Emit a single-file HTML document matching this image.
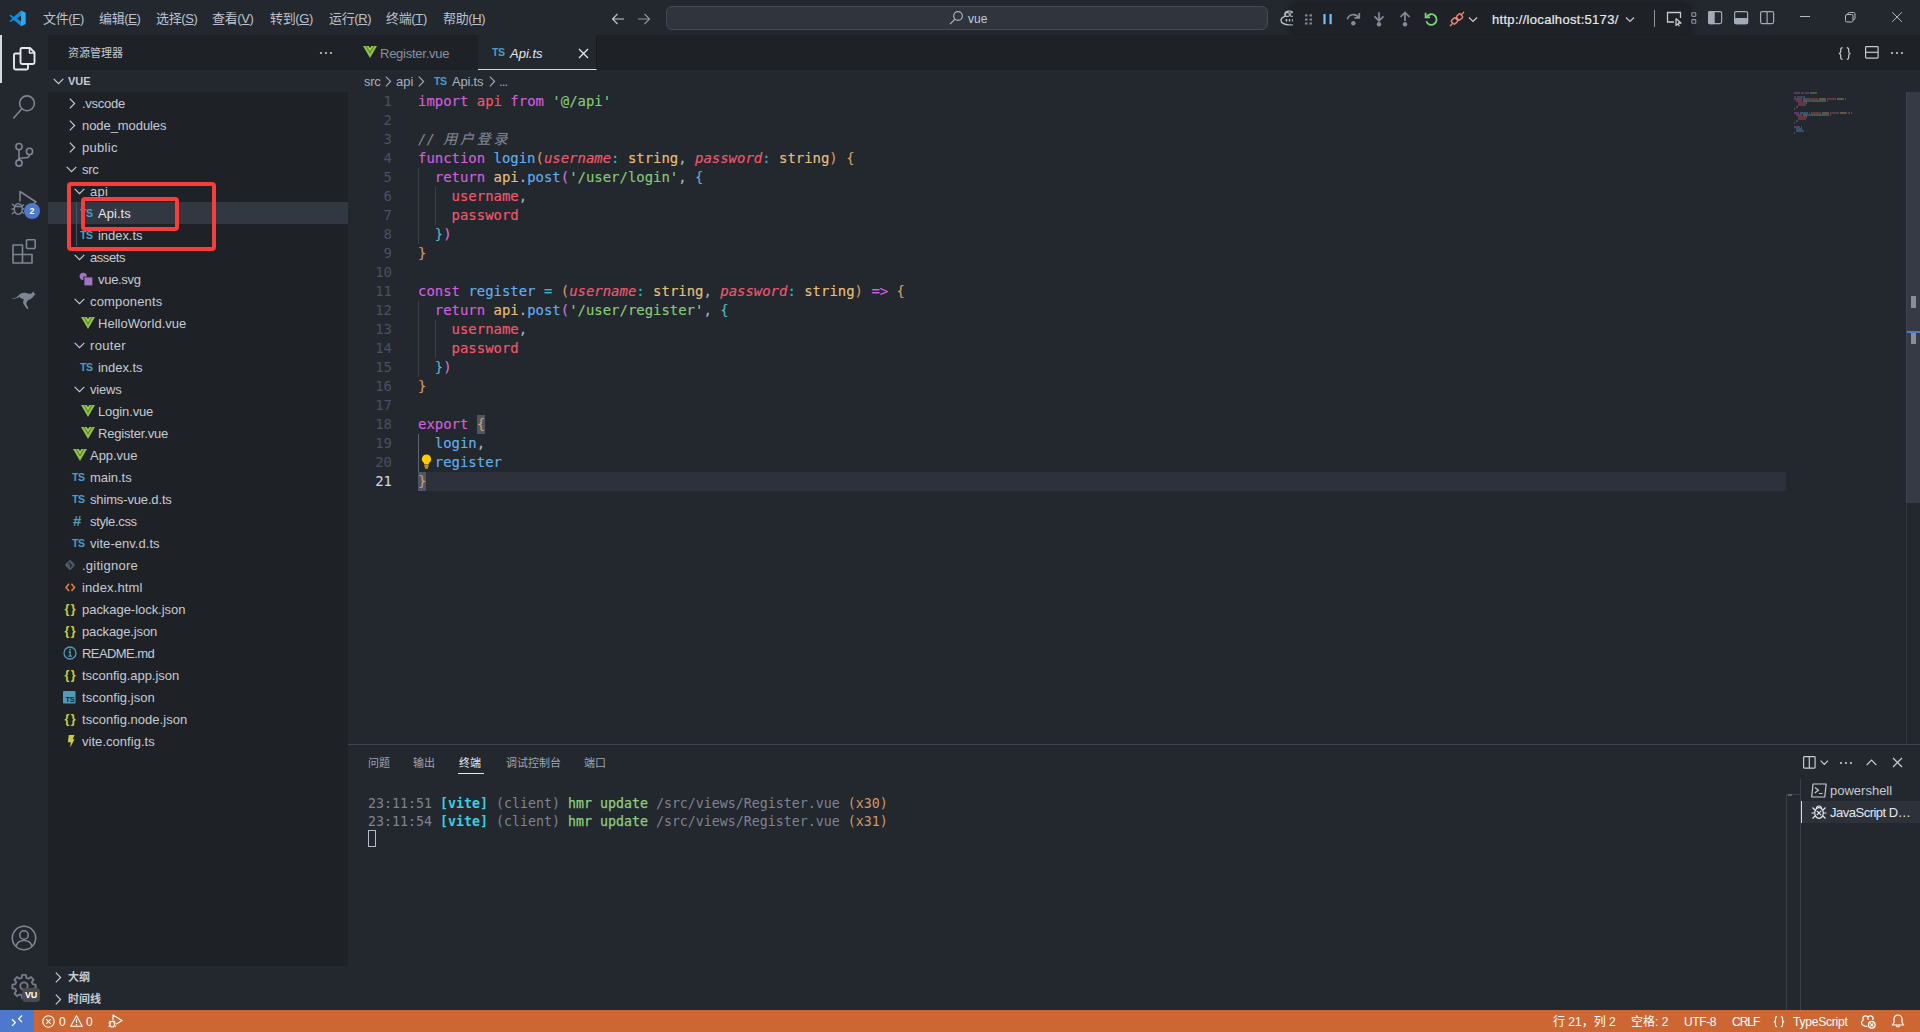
<!DOCTYPE html>
<html lang="zh-CN">
<head>
<meta charset="utf-8">
<title>Api.ts - vue - Visual Studio Code</title>
<style>
*{box-sizing:border-box;margin:0;padding:0}
html,body{width:1920px;height:1032px;overflow:hidden;background:#23272e}
body{position:relative;font-family:"Liberation Sans","Noto Sans CJK SC",sans-serif;font-size:13px;color:#c8ccd4;-webkit-font-smoothing:antialiased}
.abs{position:absolute}
svg{display:block;overflow:visible}
/* title bar */
#title{position:absolute;left:0;top:0;width:1920px;height:35px;background:#23272e}
.menu{position:absolute;top:0;height:35px;line-height:37px;font-size:13px;color:#bcc2cd;white-space:nowrap;letter-spacing:-0.35px}
#search{position:absolute;left:666px;top:6px;width:602px;height:24px;border-radius:6px;background:#2f343d;border:1px solid #434956}
#dbg{position:absolute;left:1293px;top:5.500px;width:396px;height:28.500px;background:#1e2227;border-radius:5px;box-shadow:0 0 8px 2px rgba(0,0,0,.36)}
/* activity bar */
#act{position:absolute;left:0;top:35px;width:48px;height:975px;background:#23272e}
/* sidebar */
#side{position:absolute;left:48px;top:35px;width:300px;height:975px;background:#1e2227}
.sechead{position:absolute;left:0;width:300px;height:22px;background:#23272e;font-weight:bold;font-size:11px;color:#c5cad3;line-height:22px}
.row{position:absolute;left:0;width:300px;height:22px;line-height:22px;font-size:13px;color:#c5cad3;white-space:nowrap;letter-spacing:-0.15px}
.row .t{position:absolute;top:1px}
.row svg,.row .ic{position:absolute}
.ts{font-weight:bold;font-size:10.5px;color:#4b9cc8;letter-spacing:-0.3px;font-family:"Liberation Sans",sans-serif}
/* editor */
#tabs{position:absolute;left:348px;top:35px;width:1572px;height:35px;background:#1e2227}
.tab{position:absolute;top:0;height:35px;line-height:37px;font-size:13px;white-space:nowrap}
#crumbs{position:absolute;left:348px;top:70px;width:1572px;height:22px;background:#23272e;line-height:24px;font-size:13px;color:#a9b0bd;white-space:nowrap}
#code{position:absolute;left:348px;top:92px;width:1558px;height:652px;background:#23272e;font-family:"DejaVu Sans Mono","Liberation Mono","Noto Sans CJK SC",monospace;font-size:13.95px;line-height:19px}
.cj{letter-spacing:2.8px;font-size:14px}
.ln{position:absolute;left:0;width:44px;text-align:right;color:#495162;height:19px}
.cl{position:absolute;left:70px;top:0;height:19px;white-space:pre;color:#abb2bf;-webkit-text-stroke:0.15px}
.k{color:#d55fde}.r{color:#ef596f}.g{color:#89ca78}.b{color:#61afef}.y{color:#e5c07b}.c{color:#2bbac5}.o{color:#d19a66}.p{color:#c678dd}.c2{color:#56b6c2}.cm{color:#7f848e;font-style:italic}
.i{font-style:italic}
.bm{background:#4e5666;display:inline-block;height:19px;vertical-align:top}
.guide{position:absolute;width:1px;background:#3b4048}
/* panel */
#panel{position:absolute;left:348px;top:744px;width:1572px;height:266px;background:#23272e;border-top:1px solid #3e4452}
.ptab{position:absolute;top:7px;height:22px;line-height:22px;font-size:11px;color:#9da5b4;white-space:nowrap}
.term{position:absolute;left:20px;font-family:"DejaVu Sans Mono","Liberation Mono",monospace;font-size:13.29px;line-height:18px;white-space:pre;color:#7f848e}
/* status */
#status{position:absolute;left:0;top:1010px;width:1920px;height:22px;background:#cc6633;color:#fff;font-size:12px;line-height:22px}
.st{position:absolute;top:1px;height:22px;white-space:nowrap}
</style>
</head>
<body>
<div id="title">
<svg class="abs" style="left:9.300px;top:9.500px" width="17.200" height="16.800" viewBox="0 0 100 100" preserveAspectRatio="none"><path d="M71 3 L27 41 L11 28 L2 33 L20 50 L2 67 L11 72 L27 59 L71 97 V68 L47 50 L71 32 Z" fill="#0f8fdc"/><path d="M70 3 L97 16 V84 L70 97 Z" fill="#2aabf2"/></svg>
<div class="menu" style="left:43px">文件(<u>F</u>)</div>
<div class="menu" style="left:99px">编辑(<u>E</u>)</div>
<div class="menu" style="left:156px">选择(<u>S</u>)</div>
<div class="menu" style="left:212px">查看(<u>V</u>)</div>
<div class="menu" style="left:270px">转到(<u>G</u>)</div>
<div class="menu" style="left:329px">运行(<u>R</u>)</div>
<div class="menu" style="left:386px">终端(<u>T</u>)</div>
<div class="menu" style="left:443px">帮助(<u>H</u>)</div>
<svg class="abs" style="left:611px;top:11.500px" width="14" height="14" viewBox="0 0 14 14" fill="none" stroke="#c5cad3" stroke-width="1.100"><path d="M13 7H1.5M6.5 2L1.5 7l5 5"/></svg>
<svg class="abs" style="left:637px;top:11.500px" width="14" height="14" viewBox="0 0 14 14" fill="none" stroke="#8f96a3" stroke-width="1.100"><path d="M1 7h11.5M7.5 2l5 5-5 5"/></svg>
<div id="search"></div>
<svg class="abs" style="left:949px;top:10px" width="15" height="15" viewBox="0 0 15 15" fill="none" stroke="#aeb4bf" stroke-width="1.2"><circle cx="9" cy="6" r="4.3"/><path d="M6 9.2L1 14.2"/></svg>
<div class="abs" style="left:968px;top:0;line-height:38px;font-size:12px;color:#c5cad3">vue</div>
<!-- copilot (partially hidden) -->
<svg class="abs" style="left:1279px;top:10px" width="18" height="16" viewBox="0 0 18 16" fill="none" stroke="#c5cad3" stroke-width="1.300"><path d="M14 2.200c-2-1.800-7.500-1.500-8 1.200c-0.300 1.400 0 2.300 0.300 3c-2.300 0.600-4.300 2-4.300 4c0 2.600 4 4.400 8 4.400h5"/><rect x="6.300" y="2.600" width="4" height="3.800" rx="1.200" stroke-width="1.100"/><rect x="11.300" y="2.600" width="4" height="3.800" rx="1.200" stroke-width="1.100"/><path d="M7.500 9v2.600M10.500 9v2.600M13.500 9v2.600" stroke-width="1.500"/></svg>
<div id="dbg">
<svg class="abs" style="left:11.500px;top:8px" width="8" height="12" viewBox="0 0 8 12" fill="#858b98"><rect x="0" y="0.400" width="2.500" height="2"/><rect x="4.500" y="0.400" width="2.500" height="2"/><rect x="0" y="4.600" width="2.500" height="2"/><rect x="4.500" y="4.600" width="2.500" height="2"/><rect x="0" y="8.500" width="2.500" height="2"/><rect x="4.500" y="8.500" width="2.500" height="2"/></svg>
<svg class="abs" style="left:29.500px;top:8.400px" width="10" height="11" viewBox="0 0 10 11" fill="#75beff"><rect x="0.400" y="0" width="2.200" height="10.200"/><rect x="6.500" y="0" width="2.200" height="10.200"/></svg>
<svg class="abs" style="left:52.500px;top:6.500px" width="16" height="16" viewBox="0 0 16 16" fill="none" stroke="#858b98" stroke-width="1.700"><path d="M1.300 7.300A6.200 6.200 0 0 1 12.500 5.500M13.300 1v4.900H8.400"/><circle cx="7.300" cy="11.300" r="2.200" fill="#858b98" stroke="none"/></svg>
<svg class="abs" style="left:79px;top:6.500px" width="14" height="17" viewBox="0 0 14 17" fill="none" stroke="#858b98" stroke-width="1.700"><path d="M7 0.200v8.300M2.500 4.300l4.500 4.500 4.500-4.500"/><circle cx="7" cy="12.200" r="2.200" fill="#858b98" stroke="none"/></svg>
<svg class="abs" style="left:105px;top:6.500px" width="14" height="17" viewBox="0 0 14 17" fill="none" stroke="#858b98" stroke-width="1.700"><path d="M7 9V1M2.500 5l4.500-4.500 4.500 4.500"/><circle cx="7" cy="12.200" r="2.200" fill="#858b98" stroke="none"/></svg>
<svg class="abs" style="left:131px;top:6.800px" width="14" height="14" viewBox="0 0 14 14" fill="none" stroke="#7fd07f" stroke-width="1.800"><path d="M2.800 4.700A5.300 5.300 0 1 1 2.300 9.300"/><path d="M1.600 0.800v4.500h4.500"/></svg>
<svg class="abs" style="left:156px;top:5.500px" width="16" height="16" viewBox="0 0 16 16" fill="none" stroke="#f08a73" stroke-width="1.400"><path d="M1 15l2.500-2.500M12.500 3.500L15 1"/><rect x="3" y="7.200" width="5" height="5.600" rx="1.600" transform="rotate(45 5.500 10)"/><rect x="8" y="3.200" width="5" height="5.600" rx="1.600" transform="rotate(45 10.500 6)"/><path d="M7 8l1.400-1.400M8.600 9.600L10 8.200"/></svg>
<svg class="abs" style="left:175px;top:10px" width="10" height="8" viewBox="0 0 10 8" fill="none" stroke="#c5cad3" stroke-width="1.200"><path d="M1 1.500l4 4 4-4"/></svg>
<div class="abs" style="left:199px;top:0;line-height:28.500px;font-size:13px;color:#e6e8ec;white-space:nowrap;letter-spacing:0.3px;-webkit-text-stroke:0.2px">http://localhost:5173/</div>
<svg class="abs" style="left:332px;top:10px" width="10" height="8" viewBox="0 0 10 8" fill="none" stroke="#c5cad3" stroke-width="1.200"><path d="M1 1.500l4 4 4-4"/></svg>
<div class="abs" style="left:361px;top:4.500px;width:1px;height:17px;background:#8f96a3"></div>
<svg class="abs" style="left:373px;top:5.500px" width="17" height="16" viewBox="0 0 17 16" fill="none" stroke="#c5cad3" stroke-width="1.300"><path d="M8 11H1.500V1.500h13V7"/><path d="M10 7.500v7l2-1.800 1.400 2.600M10 7.500l5 4.500h-3" stroke-linejoin="round"/></svg>
</div>
<svg class="abs" style="left:1691px;top:12px" width="6" height="13" viewBox="0 0 6 13" fill="none" stroke="#8f96a3" stroke-width="1.100"><rect x="0.800" y="0.800" width="4" height="3.600" rx="0.800"/><rect x="0.800" y="7.600" width="4" height="3.600" rx="0.800"/></svg>
<svg class="abs" style="left:1708px;top:11px" width="15" height="14" viewBox="0 0 15 14" fill="none" stroke="#a3abb9" stroke-width="1.200"><rect x="0.600" y="0.600" width="13" height="12" rx="1.500"/><rect x="0.600" y="0.600" width="5.500" height="12" rx="1" fill="#a3abb9"/></svg>
<svg class="abs" style="left:1734px;top:11px" width="15" height="14" viewBox="0 0 15 14" fill="none" stroke="#a3abb9" stroke-width="1.200"><rect x="0.600" y="0.600" width="13" height="12" rx="1.500"/><rect x="0.600" y="7.600" width="13" height="5" rx="1" fill="#a3abb9"/></svg>
<svg class="abs" style="left:1760px;top:11px" width="15" height="14" viewBox="0 0 15 14" fill="none" stroke="#a3abb9" stroke-width="1.200"><rect x="0.600" y="0.600" width="13" height="12" rx="1.500"/><path d="M7.100 0.600v12"/></svg>
<svg class="abs" style="left:1800px;top:16px" width="11" height="2" viewBox="0 0 11 2"><rect width="10" height="1" y="0" fill="#b4bac6"/></svg>
<svg class="abs" style="left:1845px;top:12px" width="11" height="11" viewBox="0 0 11 11" fill="none" stroke="#b4bac6" stroke-width="1"><rect x="0.500" y="2.500" width="7.500" height="7.500" rx="1.500"/><path d="M2.800 2.500V2a1.500 1.500 0 0 1 1.500-1.500H8.500a1.500 1.500 0 0 1 1.500 1.500V6.200a1.500 1.500 0 0 1-1.500 1.500H8"/></svg>
<svg class="abs" style="left:1892px;top:12.200px" width="10" height="10" viewBox="0 0 10 10" fill="none" stroke="#b4bac6" stroke-width="1"><path d="M0.300 0.300l9.500 9.500M9.800 0.300l-9.500 9.500"/></svg>
</div>
<div id="act">
<div class="abs" style="left:0;top:0;width:2px;height:48px;background:#d7dae0"></div>
<svg class="abs" style="left:12px;top:12px" width="24" height="24" viewBox="0 0 24 24" fill="none" stroke="#e6e8ec" stroke-width="1.900" stroke-linejoin="round"><path d="M8.500 6.500v-4a1.500 1.500 0 0 1 1.500-1.500h8l4.500 4.500v10a1.500 1.500 0 0 1-1.500 1.500h-11a1.500 1.500 0 0 1-1.500-1.500z"/><path d="M17.500 1.500v4.500h4.500" stroke-width="1.500"/><path d="M8 6.500H3.500a1.500 1.500 0 0 0-1.500 1.500v13a1.500 1.500 0 0 0 1.500 1.500h11a1.500 1.500 0 0 0 1.500-1.500v-3.500"/></svg>
<svg class="abs" style="left:12px;top:60px" width="24" height="24" viewBox="0 0 24 24" fill="none" stroke="#7f8693" stroke-width="1.600"><circle cx="15" cy="8.300" r="7.400"/><path d="M9.800 13.800L1.300 23.500"/></svg>
<svg class="abs" style="left:12px;top:107px" width="24" height="26" viewBox="0 0 24 26" fill="none" stroke="#7f8693" stroke-width="1.600"><circle cx="7" cy="4.600" r="3.100"/><circle cx="17.500" cy="9.400" r="3.100"/><circle cx="7" cy="21" r="3.100"/><path d="M7 7.700v10.200M17.500 12.500c0 3.500-3 3.500-6.500 3.500c-2.500 0-4 0.500-4 2"/></svg>
<svg class="abs" style="left:11px;top:155px" width="28" height="26" viewBox="0 0 28 26" fill="none" stroke="#7f8693" stroke-width="1.500" stroke-linejoin="round"><path d="M9 11.500V1.500l16 10.500-3 2"/><ellipse cx="7.300" cy="19" rx="4" ry="5.200"/><path d="M3.500 16.500h7.600M3.300 19H0.500M3.600 22l-2.600 2M3.600 16l-2.600-2M11 19h2M11 16l2-1.500M11 22l2 1.500"/></svg>
<div class="abs" style="left:24px;top:168px;width:16px;height:16px;border-radius:8px;background:#4d78cc;color:#fff;font-size:9px;font-weight:bold;line-height:16px;text-align:center;font-family:'Liberation Sans',sans-serif">2</div>
<svg class="abs" style="left:12px;top:204px" width="24" height="24" viewBox="0 0 24 24" fill="none" stroke="#7f8693" stroke-width="1.600" stroke-linejoin="round"><path d="M1 6h9.500v9.500H20V24H1zM1 15.500h9.500V24"/><rect x="14.500" y="0.800" width="8.700" height="8.700" rx="1"/></svg>
<svg class="abs" style="left:12px;top:256px" width="24" height="18" viewBox="0 0 24 18" fill="#7f8693"><path d="M0 7.500c3-0.300 5-1.300 7-3.500c2-2.200 5.500-3 9-1.500c1.500 0.600 2.800 0.400 4-0.500l1.500-1.800l0.500 1.800l1.500 1.500l-1.500 1c-1.500 2.500-3.500 4-6 4.500c-1 1.500-2 3-1.500 4.500l2 4l-1.500 0.500l-3.500-5c-0.500-1.500-0.500-3 0.500-4.500c-2-0.500-3.500-1.500-4.500-2.500c-2 1-4.500 1.800-7 2z"/></svg>
<svg class="abs" style="left:11px;top:890px" width="26" height="26" viewBox="0 0 26 26" fill="none" stroke="#7f8693" stroke-width="1.600"><circle cx="13" cy="13" r="11.700"/><circle cx="13" cy="10" r="4.300"/><path d="M5 21.300c1-4 4-5.800 8-5.800s7 1.800 8 5.800"/></svg>
<svg class="abs" style="left:12px;top:939px" width="24" height="24" viewBox="0 0 26 26" fill="none" stroke="#757b88" stroke-width="2" stroke-linejoin="round"><path d="M11 1h4l0.600 3.200 2.200 0.900 2.700-1.800 2.800 2.800-1.800 2.700 0.900 2.200 3.200 0.600v4l-3.200 0.600-0.900 2.200 1.800 2.700-2.800 2.800-2.700-1.800-2.200 0.900-0.600 3.200h-4l-0.600-3.200-2.200-0.900-2.700 1.800-2.800-2.800 1.800-2.700-0.900-2.200-3.200-0.600v-4l3.200-0.600 0.900-2.200-1.800-2.700 2.800-2.800 2.700 1.800 2.200-0.900z"/><circle cx="13" cy="13" r="4"/></svg>
<div class="abs" style="left:22px;top:953px;width:18px;height:14px;border-radius:4px;background:#4b4b4d;color:#fff;font-size:9px;font-weight:bold;line-height:14.500px;text-align:center;font-family:'Liberation Sans',sans-serif;letter-spacing:-0.3px">VU</div>
</div>
<div id="side">
<div class="abs" style="left:20px;top:0;height:35px;line-height:36px;font-size:11px;color:#c5cad3">资源管理器</div>
<svg class="abs" style="left:271px;top:16px" width="14" height="4" viewBox="0 0 14 4" fill="#c5cad3"><circle cx="2" cy="2" r="1.100"/><circle cx="7" cy="2" r="1.100"/><circle cx="12" cy="2" r="1.100"/></svg>
<div class="sechead" style="top:35px"><svg class="abs" style="left:5px;top:8px" width="11" height="7" viewBox="0 0 11 7" fill="none" stroke="#c5cad3" stroke-width="1.200"><path d="M0.700 0.800l4.800 4.800 4.800-4.800"/></svg><span class="abs" style="left:20px">VUE</span></div>
<div class="row" style="top:57px"><svg style="left:20.5px;top:5.500px" width="7" height="11" viewBox="0 0 7 11" fill="none" stroke="#c5cad3" stroke-width="1.2"><path d="M0.800 0.700l4.800 4.800-4.800 4.800"/></svg><span class="t" style="left:34px;letter-spacing:-0.26px">.vscode</span></div>
<div class="row" style="top:79px"><svg style="left:20.5px;top:5.500px" width="7" height="11" viewBox="0 0 7 11" fill="none" stroke="#c5cad3" stroke-width="1.2"><path d="M0.800 0.700l4.800 4.800-4.800 4.800"/></svg><span class="t" style="left:34px;letter-spacing:-0.07px">node_modules</span></div>
<div class="row" style="top:101px"><svg style="left:20.5px;top:5.500px" width="7" height="11" viewBox="0 0 7 11" fill="none" stroke="#c5cad3" stroke-width="1.2"><path d="M0.800 0.700l4.800 4.800-4.800 4.800"/></svg><span class="t" style="left:34px;letter-spacing:0.29px">public</span></div>
<div class="row" style="top:123px"><svg style="left:18px;top:8px" width="11" height="7" viewBox="0 0 11 7" fill="none" stroke="#c5cad3" stroke-width="1.2"><path d="M0.700 0.800l4.800 4.800 4.800-4.800"/></svg><span class="t" style="left:34px;letter-spacing:-0.31px">src</span></div>
<div class="row" style="top:145px"><svg style="left:26px;top:8px" width="11" height="7" viewBox="0 0 11 7" fill="none" stroke="#c5cad3" stroke-width="1.2"><path d="M0.700 0.800l4.800 4.800 4.800-4.800"/></svg><span class="t" style="left:42px;letter-spacing:0.31px">api</span></div>
<div class="row" style="top:167px;background:#323842;color:#e6e8ec"><span class="ic ts" style="left:32px;top:0">TS</span><span class="t" style="left:50px;letter-spacing:0.03px">Api.ts</span></div>
<div class="row" style="top:189px"><span class="ic ts" style="left:32px;top:0">TS</span><span class="t" style="left:50px;letter-spacing:-0.05px">index.ts</span></div>
<div class="row" style="top:211px"><svg style="left:26px;top:8px" width="11" height="7" viewBox="0 0 11 7" fill="none" stroke="#c5cad3" stroke-width="1.2"><path d="M0.700 0.800l4.800 4.800 4.800-4.800"/></svg><span class="t" style="left:42px;letter-spacing:-0.43px">assets</span></div>
<div class="row" style="top:233px"><svg style="left:31px;top:4px" width="14" height="14" viewBox="0 0 14 14"><circle cx="4.200" cy="4.300" r="3.600" fill="#a074c4"/><rect x="4.400" y="4.600" width="9" height="8.800" fill="#1e2227"/><rect x="5.400" y="5.400" width="8" height="8" fill="#a074c4"/></svg><span class="t" style="left:50px;letter-spacing:-0.3px">vue.svg</span></div>
<div class="row" style="top:255px"><svg style="left:26px;top:8px" width="11" height="7" viewBox="0 0 11 7" fill="none" stroke="#c5cad3" stroke-width="1.2"><path d="M0.700 0.800l4.800 4.800 4.800-4.800"/></svg><span class="t" style="left:42px;letter-spacing:0.15px">components</span></div>
<div class="row" style="top:277px"><svg style="left:33px;top:5px" width="14" height="12" viewBox="0 0 14 12"><path d="M0 0h2.800L7 7.200 11.200 0H14L7 12z" fill="#8dc149"/><path d="M2.800 0h2.700L7 2.600 8.500 0h2.700L7 7.200z" fill="#6a9a2f"/><path d="M4 0h1.500L7 2.600 8.500 0H10L7 5z" fill="#a5d65a"/></svg><span class="t" style="left:50px;letter-spacing:0.03px">HelloWorld.vue</span></div>
<div class="row" style="top:299px"><svg style="left:26px;top:8px" width="11" height="7" viewBox="0 0 11 7" fill="none" stroke="#c5cad3" stroke-width="1.2"><path d="M0.700 0.800l4.800 4.800 4.800-4.800"/></svg><span class="t" style="left:42px;letter-spacing:0.34px">router</span></div>
<div class="row" style="top:321px"><span class="ic ts" style="left:32px;top:0">TS</span><span class="t" style="left:50px;letter-spacing:-0.05px">index.ts</span></div>
<div class="row" style="top:343px"><svg style="left:26px;top:8px" width="11" height="7" viewBox="0 0 11 7" fill="none" stroke="#c5cad3" stroke-width="1.2"><path d="M0.700 0.800l4.800 4.800 4.800-4.800"/></svg><span class="t" style="left:42px;letter-spacing:-0.2px">views</span></div>
<div class="row" style="top:365px"><svg style="left:33px;top:5px" width="14" height="12" viewBox="0 0 14 12"><path d="M0 0h2.800L7 7.200 11.200 0H14L7 12z" fill="#8dc149"/><path d="M2.800 0h2.700L7 2.600 8.500 0h2.700L7 7.200z" fill="#6a9a2f"/><path d="M4 0h1.500L7 2.600 8.500 0H10L7 5z" fill="#a5d65a"/></svg><span class="t" style="left:50px;letter-spacing:-0.13px">Login.vue</span></div>
<div class="row" style="top:387px"><svg style="left:33px;top:5px" width="14" height="12" viewBox="0 0 14 12"><path d="M0 0h2.800L7 7.200 11.200 0H14L7 12z" fill="#8dc149"/><path d="M2.800 0h2.700L7 2.600 8.500 0h2.700L7 7.200z" fill="#6a9a2f"/><path d="M4 0h1.500L7 2.600 8.500 0H10L7 5z" fill="#a5d65a"/></svg><span class="t" style="left:50px;letter-spacing:-0.18px">Register.vue</span></div>
<div class="row" style="top:409px"><svg style="left:25px;top:5px" width="14" height="12" viewBox="0 0 14 12"><path d="M0 0h2.800L7 7.200 11.200 0H14L7 12z" fill="#8dc149"/><path d="M2.800 0h2.700L7 2.600 8.500 0h2.700L7 7.200z" fill="#6a9a2f"/><path d="M4 0h1.500L7 2.600 8.500 0H10L7 5z" fill="#a5d65a"/></svg><span class="t" style="left:42px;letter-spacing:-0.04px">App.vue</span></div>
<div class="row" style="top:431px"><span class="ic ts" style="left:24px;top:0">TS</span><span class="t" style="left:42px;letter-spacing:-0.04px">main.ts</span></div>
<div class="row" style="top:453px"><span class="ic ts" style="left:24px;top:0">TS</span><span class="t" style="left:42px;letter-spacing:-0.15px">shims-vue.d.ts</span></div>
<div class="row" style="top:475px"><span class="ic" style="left:25px;top:0;color:#519aba;font-weight:bold;font-size:15px;font-family:'Liberation Sans',sans-serif">#</span><span class="t" style="left:42px;letter-spacing:-0.35px">style.css</span></div>
<div class="row" style="top:497px"><span class="ic ts" style="left:24px;top:0">TS</span><span class="t" style="left:42px;letter-spacing:0.04px">vite-env.d.ts</span></div>
<div class="row" style="top:519px"><svg style="left:16px;top:5px" width="12" height="12" viewBox="0 0 12 12"><rect x="2.200" y="2.200" width="7.600" height="7.600" rx="1" transform="rotate(45 6 6)" fill="#4d5a68"/><path d="M4.500 3.500l2 2v3M6.500 5.500l1.800 1.200" stroke="#1e2227" stroke-width="1.100" fill="none"/></svg><span class="t" style="left:34px;letter-spacing:0.25px">.gitignore</span></div>
<div class="row" style="top:541px"><svg style="left:17px;top:7px" width="10.500" height="8.800" viewBox="0 0 12 10" fill="none" stroke="#e37933" stroke-width="1.900"><path d="M4.600 0.800L1.200 5l3.400 4.200M7.400 0.800L10.800 5 7.400 9.200"/></svg><span class="t" style="left:34px;letter-spacing:0.12px">index.html</span></div>
<div class="row" style="top:563px"><span class="ic" style="left:16.5px;top:0px;color:#d2cc3f;font-weight:bold;font-size:12.500px;letter-spacing:1.5px;font-family:'Liberation Sans',sans-serif">{}</span><span class="t" style="left:34px;letter-spacing:-0.04px">package-lock.json</span></div>
<div class="row" style="top:585px"><span class="ic" style="left:16.5px;top:0px;color:#d2cc3f;font-weight:bold;font-size:12.500px;letter-spacing:1.5px;font-family:'Liberation Sans',sans-serif">{}</span><span class="t" style="left:34px;letter-spacing:-0.12px">package.json</span></div>
<div class="row" style="top:607px"><svg style="left:15px;top:4px" width="14" height="14" viewBox="0 0 14 14" fill="none" stroke="#519aba" stroke-width="1.300"><circle cx="7" cy="7" r="6"/><path d="M5.600 6h1.600v4M5.300 10.200h3.600" stroke-width="1.300"/><circle cx="7" cy="3.700" r="0.900" fill="#519aba" stroke="none"/></svg><span class="t" style="left:34px;letter-spacing:-0.58px">README.md</span></div>
<div class="row" style="top:629px"><span class="ic" style="left:16.5px;top:0px;color:#d2cc3f;font-weight:bold;font-size:12.500px;letter-spacing:1.5px;font-family:'Liberation Sans',sans-serif">{}</span><span class="t" style="left:34px;letter-spacing:-0.02px">tsconfig.app.json</span></div>
<div class="row" style="top:651px"><svg style="left:15px;top:5px" width="13" height="13" viewBox="0 0 13 13"><rect width="12.500" height="12.500" rx="1" fill="#519aba"/><text x="2.500" y="11" font-size="7.500" font-weight="bold" fill="#1e2227" font-family="Liberation Sans,sans-serif" letter-spacing="-0.300">TS</text></svg><span class="t" style="left:34px;letter-spacing:0.04px">tsconfig.json</span></div>
<div class="row" style="top:673px"><span class="ic" style="left:16.5px;top:0px;color:#d2cc3f;font-weight:bold;font-size:12.500px;letter-spacing:1.5px;font-family:'Liberation Sans',sans-serif">{}</span><span class="t" style="left:34px;letter-spacing:0.02px">tsconfig.node.json</span></div>
<div class="row" style="top:695px"><svg style="left:18.5px;top:5px" width="8" height="12.500" viewBox="0 0 9 14"><path d="M2 0h6.500L6.500 4.800h2L3.600 14l0.600-6H1z" fill="#cbcb41"/></svg><span class="t" style="left:34px;letter-spacing:0.04px">vite.config.ts</span></div>
<div class="abs" style="left:28px;top:167px;width:1px;height:44px;background:#4b5263"></div>
<div class="abs" style="left:19px;top:147px;width:149px;height:69px;border:4px solid #f93c3c;border-radius:4px"></div>
<div class="abs" style="left:33px;top:162px;width:98px;height:34px;border:4px solid #f93c3c;border-radius:4px"></div>
<div class="sechead" style="top:931px;font-weight:bold"><svg class="abs" style="left:7px;top:5.500px" width="7" height="11" viewBox="0 0 7 11" fill="none" stroke="#c5cad3" stroke-width="1.200"><path d="M0.800 0.700l4.800 4.800-4.800 4.800"/></svg><span class="abs" style="left:20px">大纲</span></div>
<div class="sechead" style="top:953px;font-weight:bold"><svg class="abs" style="left:7px;top:5.500px" width="7" height="11" viewBox="0 0 7 11" fill="none" stroke="#c5cad3" stroke-width="1.200"><path d="M0.800 0.700l4.800 4.800-4.800 4.800"/></svg><span class="abs" style="left:20px">时间线</span></div>
</div>
<div id="tabs">
<svg class="abs" style="left:15px;top:11px" width="14" height="12" viewBox="0 0 14 12"><path d="M0 0h2.800L7 7.200 11.200 0H14L7 12z" fill="#8dc149"/><path d="M2.800 0h2.700L7 2.600 8.500 0h2.700L7 7.200z" fill="#6a9a2f"/><path d="M4 0h1.500L7 2.600 8.500 0H10L7 5z" fill="#a5d65a"/></svg>
<div class="tab" style="left:32px;color:#8a919e;letter-spacing:-0.25px">Register.vue</div>
<div class="abs" style="left:130px;top:0;width:119px;height:35px;background:#23272e;border-bottom:1px solid #d7dae0;border-right:1px solid #181a1f"></div>
<span class="abs ts" style="left:144px;top:0;line-height:34px">TS</span>
<div class="tab" style="left:162px;color:#e6e8ec;font-style:italic">Api.ts</div>
<svg class="abs" style="left:230px;top:13px" width="11" height="11" viewBox="0 0 11 11" fill="none" stroke="#e6e8ec" stroke-width="1.300"><path d="M1 1l9 9M10 1l-9 9"/></svg>
<svg class="abs" style="left:1490.400px;top:11.500px" width="13.400" height="13" viewBox="0 0 13.400 13" fill="none" stroke="#c5cad3" stroke-width="1.200"><path d="M4.600 0.700C3.100 0.700 2.700 1.500 2.700 2.800V4.700C2.700 5.800 2.100 6.300 0.900 6.500C2.100 6.700 2.700 7.200 2.700 8.300V10.200C2.700 11.500 3.100 12.300 4.600 12.300"/><path d="M8.800 0.700C10.300 0.700 10.700 1.500 10.700 2.800V4.700C10.700 5.800 11.300 6.300 12.500 6.500C11.300 6.700 10.700 7.200 10.700 8.300V10.200C10.700 11.500 10.300 12.300 8.800 12.300"/></svg>
<svg class="abs" style="left:1516.500px;top:11px" width="14" height="13" viewBox="0 0 14 13" fill="none" stroke="#c5cad3" stroke-width="1.200"><rect x="0.600" y="0.600" width="12.500" height="11.500" rx="0.800"/><path d="M0.600 6.300h12.500"/></svg>
<svg class="abs" style="left:1542px;top:16px" width="14" height="4" viewBox="0 0 14 4" fill="#c5cad3"><circle cx="2" cy="2" r="1.100"/><circle cx="7" cy="2" r="1.100"/><circle cx="12" cy="2" r="1.100"/></svg>
</div>
<div id="crumbs">
<span class="abs" style="left:16px;letter-spacing:-0.3px">src</span><svg class="abs" style="left:37px;top:6px" width="7" height="11" viewBox="0 0 7 11" fill="none" stroke="#a0a7b4" stroke-width="1.200"><path d="M0.800 0.700l4.800 4.800-4.800 4.800"/></svg>
<span class="abs" style="left:48px">api</span><svg class="abs" style="left:70px;top:6px" width="7" height="11" viewBox="0 0 7 11" fill="none" stroke="#a0a7b4" stroke-width="1.200"><path d="M0.800 0.700l4.800 4.800-4.800 4.800"/></svg>
<span class="abs ts" style="left:86px;top:0;line-height:23px">TS</span>
<span class="abs" style="left:104px;letter-spacing:-0.2px">Api.ts</span><svg class="abs" style="left:140.5px;top:6px" width="7" height="11" viewBox="0 0 7 11" fill="none" stroke="#a0a7b4" stroke-width="1.200"><path d="M0.800 0.700l4.800 4.800-4.800 4.800"/></svg>
<span class="abs" style="left:151px;letter-spacing:-0.8px">...</span>
</div>
<div id="code">
<div class="abs" style="left:70px;top:380px;width:1368px;height:19px;background:#2c313c"></div>
<div class="guide" style="left:70px;top:76px;height:76px;background:#3b4048"></div>
<div class="guide" style="left:87px;top:95px;height:38px;background:#3b4048"></div>
<div class="guide" style="left:70px;top:209px;height:76px;background:#3b4048"></div>
<div class="guide" style="left:87px;top:228px;height:38px;background:#3b4048"></div>
<div class="guide" style="left:70px;top:342px;height:38px;background:#5c6370"></div>
<div class="ln" style="top:0px">1</div><div class="cl" style="top:0px"><span class="k">import</span> <span class="r">api</span> <span class="k">from</span> <span class="g">'@/api'</span></div>
<div class="ln" style="top:19px">2</div><div class="cl" style="top:19px"></div>
<div class="ln" style="top:38px">3</div><div class="cl" style="top:38px"><span class="cm">// <span class="cj">用户登录</span></span></div>
<div class="ln" style="top:57px">4</div><div class="cl" style="top:57px"><span class="k">function</span> <span class="b">login</span><span class="o">(</span><span class="r i">username</span><span class="c">:</span> <span class="y">string</span>, <span class="r i">password</span><span class="c">:</span> <span class="y">string</span><span class="o">)</span> <span class="o">{</span></div>
<div class="ln" style="top:76px">5</div><div class="cl" style="top:76px">  <span class="k">return</span> <span class="y">api</span>.<span class="b">post</span><span class="p">(</span><span class="g">'/user/login'</span>, <span class="c2">{</span></div>
<div class="ln" style="top:95px">6</div><div class="cl" style="top:95px">    <span class="r">username</span>,</div>
<div class="ln" style="top:114px">7</div><div class="cl" style="top:114px">    <span class="r">password</span></div>
<div class="ln" style="top:133px">8</div><div class="cl" style="top:133px">  <span class="c2">}</span><span class="p">)</span></div>
<div class="ln" style="top:152px">9</div><div class="cl" style="top:152px"><span class="o">}</span></div>
<div class="ln" style="top:171px">10</div><div class="cl" style="top:171px"></div>
<div class="ln" style="top:190px">11</div><div class="cl" style="top:190px"><span class="k">const</span> <span class="b">register</span> <span class="c">=</span> <span class="o">(</span><span class="r i">username</span><span class="c">:</span> <span class="y">string</span>, <span class="r i">password</span><span class="c">:</span> <span class="y">string</span><span class="o">)</span> <span class="k">=&gt;</span> <span class="o">{</span></div>
<div class="ln" style="top:209px">12</div><div class="cl" style="top:209px">  <span class="k">return</span> <span class="y">api</span>.<span class="b">post</span><span class="p">(</span><span class="g">'/user/register'</span>, <span class="c2">{</span></div>
<div class="ln" style="top:228px">13</div><div class="cl" style="top:228px">    <span class="r">username</span>,</div>
<div class="ln" style="top:247px">14</div><div class="cl" style="top:247px">    <span class="r">password</span></div>
<div class="ln" style="top:266px">15</div><div class="cl" style="top:266px">  <span class="c2">}</span><span class="p">)</span></div>
<div class="ln" style="top:285px">16</div><div class="cl" style="top:285px"><span class="o">}</span></div>
<div class="ln" style="top:304px">17</div><div class="cl" style="top:304px"></div>
<div class="ln" style="top:323px">18</div><div class="cl" style="top:323px"><span class="k">export</span> <span class="o bm">{</span></div>
<div class="ln" style="top:342px">19</div><div class="cl" style="top:342px">  <span class="b">login</span>,</div>
<div class="ln" style="top:361px">20</div><div class="cl" style="top:361px">  <span class="b">register</span></div>
<div class="ln" style="top:380px;color:#d7dae0">21</div><div class="cl" style="top:380px"><span class="o bm">}</span></div>
<svg class="abs" style="left:73px;top:361.500px" width="11" height="15" viewBox="0 0 11 15"><path d="M5.500 0.500a4.600 4.600 0 0 0-3 8.100c0.600 0.600 0.900 1.200 0.900 1.900h4.200c0-0.700 0.300-1.300 0.900-1.900a4.600 4.600 0 0 0-3-8.100z" fill="#ffcc00"/><rect x="3.400" y="11.300" width="4.200" height="1.300" fill="#ffcc00"/><rect x="3.900" y="13.300" width="3.200" height="1.200" fill="#ffcc00"/></svg>
</div>
<!--mm-->
<div id="mini" class="abs" style="left:1786px;top:92px;width:120px;height:652px;background:#23272e"></div>
<svg class="abs" style="left:1794px;top:92px" width="100" height="44" viewBox="0 0 100 44" opacity="0.450"><rect x="0" y="0.3" width="6" height="1.400" fill="#d55fde"/><rect x="7" y="0.3" width="3" height="1.400" fill="#ef596f"/><rect x="11" y="0.3" width="4" height="1.400" fill="#d55fde"/><rect x="16" y="0.3" width="7" height="1.400" fill="#89ca78"/><rect x="0" y="4.3" width="2" height="1.400" fill="#7f848e"/><rect x="3" y="4.3" width="8" height="1.400" fill="#7f848e"/><rect x="0" y="6.3" width="8" height="1.400" fill="#d55fde"/><rect x="9" y="6.3" width="5" height="1.400" fill="#61afef"/><rect x="14" y="6.3" width="1" height="1.400" fill="#d19a66"/><rect x="15" y="6.3" width="8" height="1.400" fill="#ef596f"/><rect x="23" y="6.3" width="1" height="1.400" fill="#2bbac5"/><rect x="25" y="6.3" width="6" height="1.400" fill="#e5c07b"/><rect x="31" y="6.3" width="1" height="1.400" fill="#abb2bf"/><rect x="33" y="6.3" width="8" height="1.400" fill="#ef596f"/><rect x="41" y="6.3" width="1" height="1.400" fill="#2bbac5"/><rect x="43" y="6.3" width="6" height="1.400" fill="#e5c07b"/><rect x="49" y="6.3" width="1" height="1.400" fill="#d19a66"/><rect x="51" y="6.3" width="1" height="1.400" fill="#d19a66"/><rect x="2" y="8.3" width="6" height="1.400" fill="#d55fde"/><rect x="9" y="8.3" width="3" height="1.400" fill="#e5c07b"/><rect x="12" y="8.3" width="1" height="1.400" fill="#abb2bf"/><rect x="13" y="8.3" width="4" height="1.400" fill="#61afef"/><rect x="17" y="8.3" width="1" height="1.400" fill="#c678dd"/><rect x="18" y="8.3" width="13" height="1.400" fill="#89ca78"/><rect x="31" y="8.3" width="1" height="1.400" fill="#abb2bf"/><rect x="33" y="8.3" width="1" height="1.400" fill="#56b6c2"/><rect x="4" y="10.3" width="8" height="1.400" fill="#ef596f"/><rect x="12" y="10.3" width="1" height="1.400" fill="#abb2bf"/><rect x="4" y="12.3" width="8" height="1.400" fill="#ef596f"/><rect x="2" y="14.3" width="1" height="1.400" fill="#56b6c2"/><rect x="3" y="14.3" width="1" height="1.400" fill="#c678dd"/><rect x="0" y="16.3" width="1" height="1.400" fill="#d19a66"/><rect x="0" y="20.3" width="5" height="1.400" fill="#d55fde"/><rect x="6" y="20.3" width="8" height="1.400" fill="#61afef"/><rect x="15" y="20.3" width="1" height="1.400" fill="#2bbac5"/><rect x="17" y="20.3" width="1" height="1.400" fill="#d19a66"/><rect x="18" y="20.3" width="8" height="1.400" fill="#ef596f"/><rect x="26" y="20.3" width="1" height="1.400" fill="#2bbac5"/><rect x="28" y="20.3" width="6" height="1.400" fill="#e5c07b"/><rect x="34" y="20.3" width="1" height="1.400" fill="#abb2bf"/><rect x="36" y="20.3" width="8" height="1.400" fill="#ef596f"/><rect x="44" y="20.3" width="1" height="1.400" fill="#2bbac5"/><rect x="46" y="20.3" width="6" height="1.400" fill="#e5c07b"/><rect x="52" y="20.3" width="1" height="1.400" fill="#d19a66"/><rect x="54" y="20.3" width="2" height="1.400" fill="#d55fde"/><rect x="57" y="20.3" width="1" height="1.400" fill="#d19a66"/><rect x="2" y="22.3" width="6" height="1.400" fill="#d55fde"/><rect x="9" y="22.3" width="3" height="1.400" fill="#e5c07b"/><rect x="12" y="22.3" width="1" height="1.400" fill="#abb2bf"/><rect x="13" y="22.3" width="4" height="1.400" fill="#61afef"/><rect x="17" y="22.3" width="1" height="1.400" fill="#c678dd"/><rect x="18" y="22.3" width="16" height="1.400" fill="#89ca78"/><rect x="34" y="22.3" width="1" height="1.400" fill="#abb2bf"/><rect x="36" y="22.3" width="1" height="1.400" fill="#56b6c2"/><rect x="4" y="24.3" width="8" height="1.400" fill="#ef596f"/><rect x="12" y="24.3" width="1" height="1.400" fill="#abb2bf"/><rect x="4" y="26.3" width="8" height="1.400" fill="#ef596f"/><rect x="2" y="28.3" width="1" height="1.400" fill="#56b6c2"/><rect x="3" y="28.3" width="1" height="1.400" fill="#c678dd"/><rect x="0" y="30.3" width="1" height="1.400" fill="#d19a66"/><rect x="0" y="34.3" width="6" height="1.400" fill="#d55fde"/><rect x="7" y="34.3" width="1" height="1.400" fill="#d19a66"/><rect x="2" y="36.3" width="5" height="1.400" fill="#61afef"/><rect x="7" y="36.3" width="1" height="1.400" fill="#abb2bf"/><rect x="2" y="38.3" width="8" height="1.400" fill="#61afef"/><rect x="0" y="40.3" width="1" height="1.400" fill="#d19a66"/></svg>
<div class="abs" style="left:1906px;top:92px;width:14px;height:652px;background:#23272e;border-left:1px solid #2f343d"></div>
<div class="abs" style="left:1906px;top:92px;width:14px;height:411px;background:#353a45;border-left:1px solid #3e4451"></div>
<div class="abs" style="left:1911px;top:296px;width:5px;height:12px;background:#8a8e96"></div>
<div class="abs" style="left:1911px;top:333px;width:5px;height:11px;background:#8a8e96"></div>
<div class="abs" style="left:1907px;top:331px;width:13px;height:2px;background:#4d78cc"></div>
<!--/mm-->
<div id="panel">
<div class="ptab" style="left:20px">问题</div>
<div class="ptab" style="left:65px">输出</div>
<div class="ptab" style="left:111px;color:#e6e8ec">终端</div>
<div class="abs" style="left:110px;top:28px;width:26px;height:1px;background:#e6e8ec"></div>
<div class="ptab" style="left:158px">调试控制台</div>
<div class="ptab" style="left:236px">端口</div>
<div class="term" style="top:50px">23:11:51 <b style="color:#3ccfe0">[vite]</b> (client) <span style="color:#8fce7c;-webkit-text-stroke:0.25px">hmr update</span> /src/views/Register.vue <span style="color:#d19a66">(x30)</span></div>
<div class="term" style="top:68px">23:11:54 <b style="color:#3ccfe0">[vite]</b> (client) <span style="color:#8fce7c;-webkit-text-stroke:0.25px">hmr update</span> /src/views/Register.vue <span style="color:#d19a66">(x31)</span></div>
<div class="abs" style="left:20px;top:85px;width:8px;height:17px;border:1px solid #b4bac6"></div>
<svg class="abs" style="left:1455px;top:11px" width="13" height="13" viewBox="0 0 13 13" fill="none" stroke="#c5cad3" stroke-width="1.200"><rect x="0.600" y="0.600" width="11.500" height="11.500" rx="0.800"/><path d="M6.300 0.600v11.500"/></svg>
<svg class="abs" style="left:1472px;top:15px" width="9" height="6" viewBox="0 0 9 6" fill="none" stroke="#c5cad3" stroke-width="1.200"><path d="M0.600 0.700l3.700 3.700 3.700-3.700"/></svg>
<svg class="abs" style="left:1491px;top:16px" width="14" height="4" viewBox="0 0 14 4" fill="#c5cad3"><circle cx="2" cy="2" r="1.100"/><circle cx="7" cy="2" r="1.100"/><circle cx="12" cy="2" r="1.100"/></svg>
<svg class="abs" style="left:1518px;top:14px" width="11" height="7" viewBox="0 0 11 7" fill="none" stroke="#c5cad3" stroke-width="1.200"><path d="M0.700 6l4.800-4.800 4.800 4.800"/></svg>
<svg class="abs" style="left:1544px;top:12px" width="11" height="11" viewBox="0 0 11 11" fill="none" stroke="#c5cad3" stroke-width="1.300"><path d="M1 1l9 9M10 1l-9 9"/></svg>
<div class="abs" style="left:1438px;top:49px;width:1px;height:216px;background:#3a3f4b"></div>
<div class="abs" style="left:1438px;top:49px;width:14px;height:1px;background:#3a3f4b"></div>
<div class="abs" style="left:1440px;top:49px;width:4px;height:2px;background:#5c6370"></div>
<div class="abs" style="left:1452px;top:34px;width:1px;height:231px;background:#3a3f4b"></div>
<svg class="abs" style="left:1463px;top:38px" width="16" height="15" viewBox="0 0 16 15" fill="none" stroke="#c5cad3" stroke-width="1.200" stroke-linejoin="round"><path d="M2 1h13.200l-1.500 13H0.700z"/><path d="M4 4.500l3.500 2.800-3.800 2.800M8 10.500h3.500"/></svg>
<div class="abs" style="left:1482px;top:35px;line-height:22px;font-size:13px;color:#c5cad3;white-space:nowrap">powershell</div>
<div class="abs" style="left:1453px;top:56px;width:119px;height:22px;background:#2c313a;border-left:1px solid #d7dae0"></div>
<svg class="abs" style="left:1463px;top:59px" width="16" height="16" viewBox="0 0 16 16" fill="none" stroke="#e6e8ec" stroke-width="1.200"><ellipse cx="8" cy="9" rx="4.300" ry="5.300"/><path d="M5.500 4.500a2.500 2.500 0 0 1 5 0M3.700 9H0.500M15.500 9h-3.200M4 6L1.500 3.500M12 6l2.500-2.500M4 12l-2.500 2.500M12 12l2.500 2.500M5.800 6.800l4.400 4.400M10.200 6.800l-4.400 4.400"/></svg>
<div class="abs" style="left:1482px;top:57px;line-height:22px;font-size:13px;color:#e6e8ec;white-space:nowrap;letter-spacing:-0.5px">JavaScript D…</div>
</div>
<div id="status">
<div class="abs" style="left:0;top:0;width:34px;height:22px;background:#4d78cc"></div>
<svg class="abs" style="left:11px;top:5px" width="12" height="12" viewBox="0 0 12 12" fill="none" stroke="#fff" stroke-width="1.300"><path d="M1 5.800l3.300 3.300-3.300 3.300" transform="translate(0,-1.500)"/><path d="M11 0.500L7.700 3.800 11 7.100" transform="translate(0,0)"/></svg>
<svg class="abs" style="left:42px;top:5px" width="13" height="13" viewBox="0 0 13 13" fill="none" stroke="#fff" stroke-width="1.100"><circle cx="6.500" cy="6.500" r="5.700"/><path d="M4.200 4.200l4.600 4.600M8.800 4.200l-4.600 4.600"/></svg>
<div class="st" style="left:59px">0</div>
<svg class="abs" style="left:70px;top:5px" width="13" height="12" viewBox="0 0 13 12" fill="none" stroke="#fff" stroke-width="1.100" stroke-linejoin="round"><path d="M6.500 0.800L12.300 11.300H0.700z"/><path d="M6.500 4.300v3.700M6.500 9v1.200"/></svg>
<div class="st" style="left:86px">0</div>
<svg class="abs" style="left:108px;top:4px" width="15" height="14" viewBox="0 0 15 14" fill="none" stroke="#fff" stroke-width="1.100" stroke-linejoin="round"><path d="M5 6.500V1l9 5.500-6 3.800"/><ellipse cx="4.200" cy="10.200" rx="2.200" ry="2.800"/><path d="M2 9H0.500M2 11.500l-1.500 1M6.400 9h1.500M6.400 11.500l1.500 1M2.500 7.800L1.300 6.800M5.900 7.800l1.200-1"/></svg>
<div class="st" style="left:1553px">行 21，列 2</div>
<div class="st" style="left:1631px">空格: 2</div>
<div class="st" style="left:1684px;letter-spacing:-0.4px">UTF-8</div>
<div class="st" style="left:1732px;letter-spacing:-1px">CRLF</div>
<svg class="abs" style="left:1773px;top:5.500px" width="12" height="11.500" viewBox="0 0 13.400 13" fill="none" stroke="#fff" stroke-width="1.300"><path d="M4.600 0.700C3.100 0.700 2.700 1.500 2.700 2.800V4.700C2.700 5.800 2.100 6.300 0.900 6.500C2.100 6.700 2.700 7.200 2.700 8.300V10.200C2.700 11.500 3.100 12.300 4.600 12.300"/><path d="M8.800 0.700C10.300 0.700 10.700 1.500 10.700 2.800V4.700C10.700 5.800 11.300 6.300 12.500 6.500C11.300 6.700 10.700 7.200 10.700 8.300V10.200C10.700 11.500 10.300 12.300 8.800 12.300"/></svg>
<div class="st" style="left:1793px;letter-spacing:-0.2px">TypeScript</div>
<svg class="abs" style="left:1860px;top:4px" width="16" height="15" viewBox="0 0 16 15" fill="none" stroke="#fff" stroke-width="1.300"><path d="M8 3c-0.800-1.600-4.200-1.700-4.900 0.300c-0.300 1-0.100 2 0.200 2.700c-1.300 0.700-1.800 1.500-1.800 2.800c0 2.200 3 3.700 6 3.700"/><path d="M8 3c0.800-1.600 4.200-1.700 4.900 0.300c0.300 1 0.100 2-0.200 2.700"/><path d="M8 3v3" stroke-width="1.100"/><circle cx="11.800" cy="10.800" r="3.300" fill="#cc6633"/><path d="M10.300 9.300l3 3M13.300 9.300l-3 3" stroke-width="1.100"/></svg>
<svg class="abs" style="left:1891px;top:4px" width="14" height="14" viewBox="0 0 14 14" fill="none" stroke="#fff" stroke-width="1.200" stroke-linejoin="round"><path d="M7 1a4 4 0 0 0-4 4v3.500L1.300 11h11.400L11 8.500V5a4 4 0 0 0-4-4z"/><path d="M5.500 11.500a1.500 1.500 0 0 0 3 0"/></svg>
</div>
</body>
</html>
